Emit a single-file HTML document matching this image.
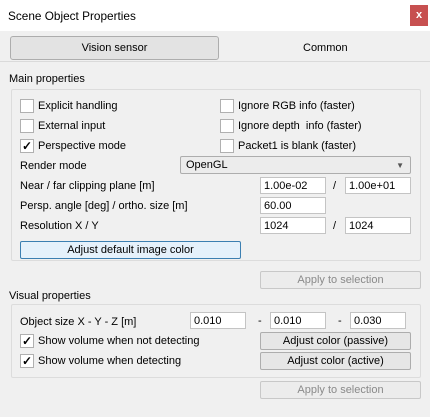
<!DOCTYPE html>
<html><head><style>
*{box-sizing:border-box;margin:0;padding:0}
body{width:430px;height:417px;background:#f0f0f0;font-family:"Liberation Sans",sans-serif;font-size:11px;color:#000;position:relative;overflow:hidden}
.a{position:absolute;white-space:nowrap}
.t{margin-top:2px}
.title{left:0;top:0;width:430px;height:31px;background:#fff}
.cb{position:absolute;width:14px;height:14px;border:1px solid #b0b0b0;background:#fff;font-size:12px;line-height:12px;text-align:center;font-weight:bold}
.f{position:absolute;height:17px;border:1px solid #c4c4c4;background:#fff;padding-left:3px;line-height:16px}
.btn{position:absolute;border:1px solid #adadad;background:#e6e6e6;text-align:center;line-height:17px;border-radius:2px}
.dis{color:#8a8a8a;border-color:#c8c8c8;background:#ececec}
.grp{position:absolute;border:1px solid #dcdcdc;border-radius:2px}
</style></head><body>
<div class="a title"></div>
<div class="a" style="left:8px;top:9px;font-size:11.8px">Scene Object Properties</div>
<div class="a" style="left:410px;top:5px;width:18px;height:21px;background:#c75050;color:#fff;text-align:center;line-height:20px;font-size:11px;font-weight:bold">x</div>
<div class="btn" style="left:10px;top:36px;width:209px;height:24px;line-height:23px;background:#e3e3e3;border-radius:3px">Vision sensor</div>
<div class="a" style="left:303px;top:42px">Common</div>
<div class="a" style="left:0;top:61px;width:430px;height:1px;background:#dadada"></div>
<div class="a" style="left:9px;top:73px">Main properties</div>
<div class="grp" style="left:11px;top:89px;width:410px;height:172px"></div>
<div class="cb" style="left:20px;top:99px"></div><div class="a" style="left:38px;top:100px">Explicit handling</div>
<div class="cb" style="left:20px;top:119px"></div><div class="a" style="left:38px;top:120px">External input</div>
<div class="cb" style="left:20px;top:139px">✓</div><div class="a" style="left:38px;top:140px">Perspective mode</div>
<div class="cb" style="left:220px;top:99px"></div><div class="a" style="left:238px;top:100px">Ignore RGB info (faster)</div>
<div class="cb" style="left:220px;top:119px"></div><div class="a" style="left:238px;top:120px">Ignore depth&nbsp; info (faster)</div>
<div class="cb" style="left:220px;top:139px"></div><div class="a" style="left:238px;top:140px">Packet1 is blank (faster)</div>
<div class="a" style="left:20px;top:160px">Render mode</div>
<div class="btn" style="left:180px;top:156px;width:231px;height:18px;text-align:left;padding-left:5px;background:#ececec">OpenGL<span style="position:absolute;right:6px;top:0;font-size:8px;color:#555">▼</span></div>
<div class="a" style="left:20px;top:180px">Near / far clipping plane [m]</div>
<div class="f" style="left:260px;top:177px;width:66px">1.00e-02</div>
<div class="a" style="left:333px;top:180px">/</div>
<div class="f" style="left:345px;top:177px;width:66px">1.00e+01</div>
<div class="a" style="left:20px;top:200px">Persp. angle [deg] / ortho. size [m]</div>
<div class="f" style="left:260px;top:197px;width:66px">60.00</div>
<div class="a" style="left:20px;top:220px">Resolution X / Y</div>
<div class="f" style="left:260px;top:217px;width:66px">1024</div>
<div class="a" style="left:333px;top:220px">/</div>
<div class="f" style="left:345px;top:217px;width:66px">1024</div>
<div class="btn" style="left:20px;top:241px;width:221px;height:18px;border-color:#3c7fb1;background:#e5f1fb">Adjust default image color</div>
<div class="btn dis" style="left:260px;top:271px;width:161px;height:18px">Apply to selection</div>
<div class="a" style="left:9px;top:290px">Visual properties</div>
<div class="grp" style="left:11px;top:304px;width:410px;height:74px"></div>
<div class="a" style="left:20px;top:316px">Object size X - Y - Z [m]</div>
<div class="f" style="left:190px;top:312px;width:56px">0.010</div>
<div class="a" style="left:258px;top:315px">-</div>
<div class="f" style="left:270px;top:312px;width:56px">0.010</div>
<div class="a" style="left:338px;top:315px">-</div>
<div class="f" style="left:350px;top:312px;width:56px">0.030</div>
<div class="cb" style="left:20px;top:334px">✓</div><div class="a" style="left:38px;top:335px">Show volume when not detecting</div>
<div class="cb" style="left:20px;top:354px">✓</div><div class="a" style="left:38px;top:355px">Show volume when detecting</div>
<div class="btn" style="left:260px;top:332px;width:151px;height:18px">Adjust color (passive)</div>
<div class="btn" style="left:260px;top:352px;width:151px;height:18px">Adjust color (active)</div>
<div class="btn dis" style="left:260px;top:381px;width:161px;height:18px">Apply to selection</div>
</body></html>
